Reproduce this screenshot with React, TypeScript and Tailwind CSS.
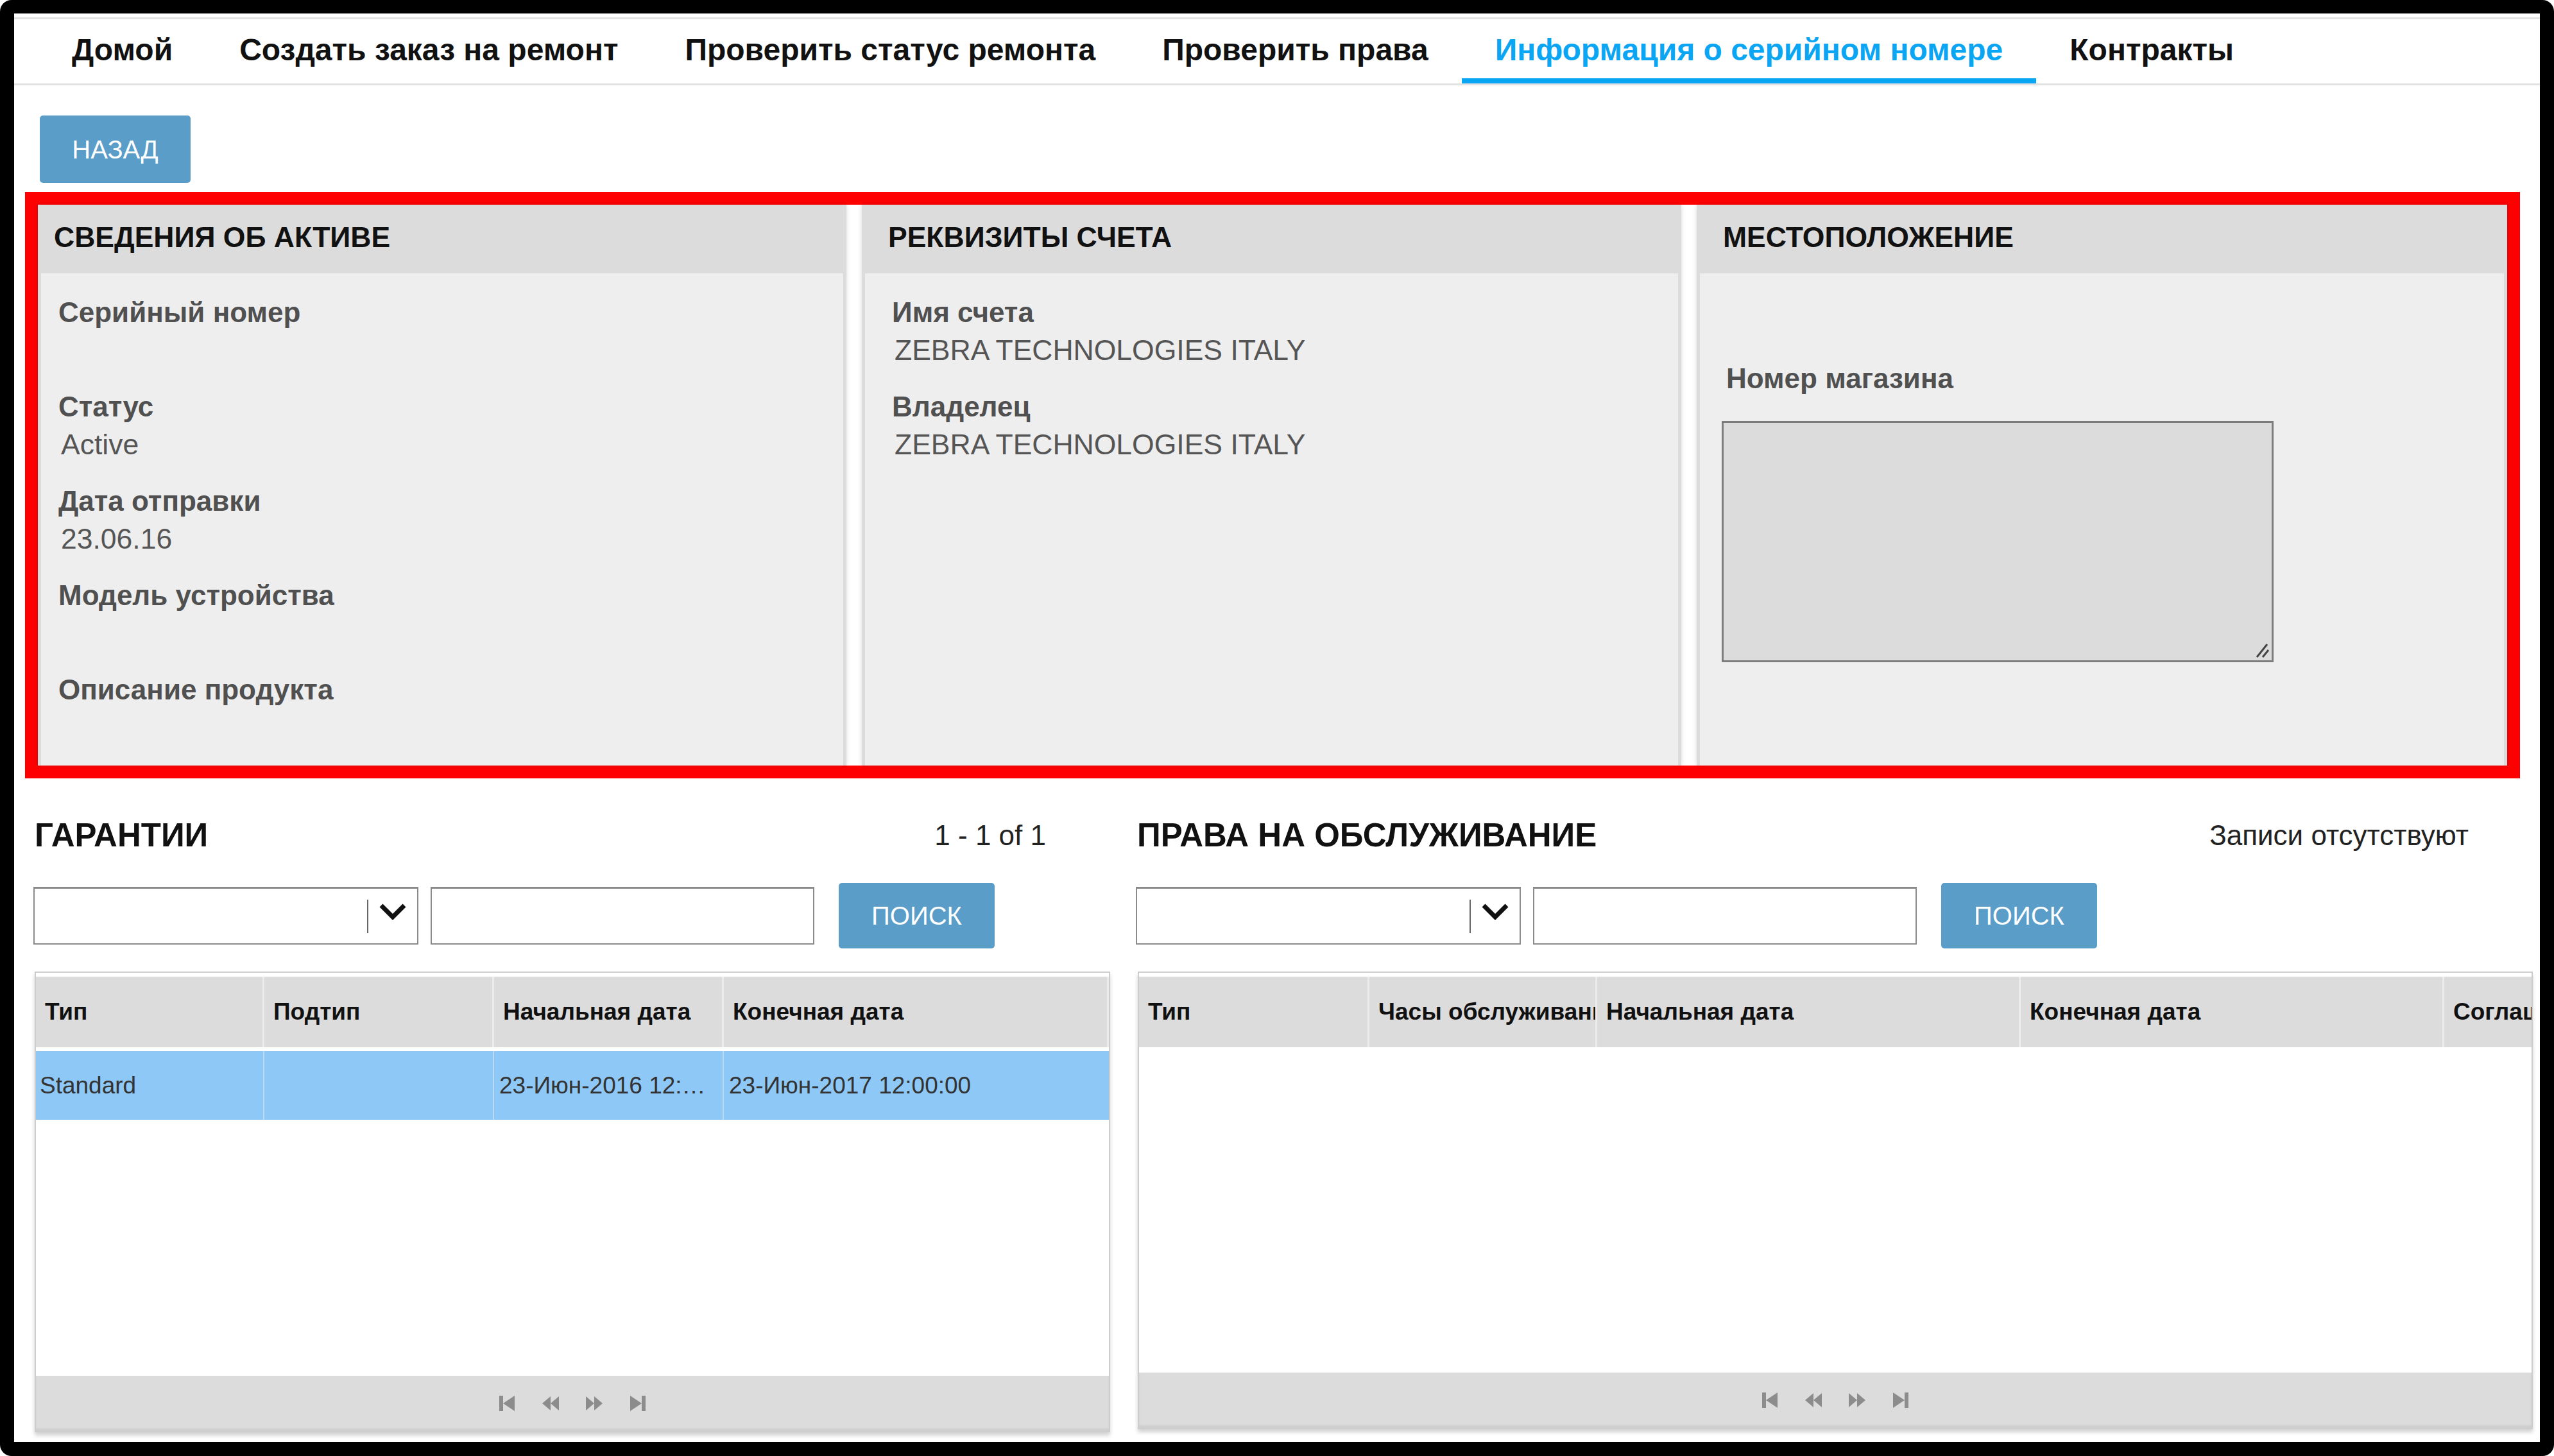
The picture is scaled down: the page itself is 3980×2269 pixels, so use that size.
import clsx from 'clsx';
import type { ReactNode } from 'react';

const NAV_ITEMS = [
    'Домой',
    'Создать заказ на ремонт',
    'Проверить статус ремонта',
    'Проверить права',
    'Информация о серийном номере',
    'Контракты',
];
const ACTIVE_TAB = 'Информация о серийном номере';

const WARRANTY_COLS = ['Тип', 'Подтип', 'Начальная дата', 'Конечная дата'];
const ENTITLEMENT_COLS = [
    { label: 'Тип', w: 'w-[359px]' },
    { label: 'Часы обслуживания', w: 'w-[355px]' },
    { label: 'Начальная дата', w: 'w-[660px]' },
    { label: 'Конечная дата', w: 'w-[660px]' },
    { label: 'Соглашение', w: 'w-[400px]' },
];

function Panel({ title, first, children }: { title: string; first?: boolean; children?: ReactNode }) {
    return (
        <div className="flex flex-col bg-[#dcdcdc] shadow-[0_0_7px_rgba(0,0,0,0.14)]">
            <div
                className={clsx(
                    'flex h-[107px] shrink-0 items-center pb-[4px] text-[44.5px] font-bold text-[#111]',
                    first ? 'pl-[25px]' : 'pl-[41px]',
                )}
            >
                {title}
            </div>
            <div className={clsx('mx-[5px] flex-1 bg-[#eeeeee] pt-[31px]', first ? 'pl-[27px]' : 'pl-[42px]')}>
                {children}
            </div>
        </div>
    );
}

function Field({ label, value }: { label: string; value?: string }) {
    return (
        <div className="mb-[29px]">
            <div className="h-[60px] text-[44px] leading-[60px] font-bold text-[#505050]">{label}</div>
            <div className="h-[58px] pl-[4px] text-[44.5px] leading-[58px] text-[#555]">{value}</div>
        </div>
    );
}

function PagerIcon({ kind }: { kind: 'first' | 'prev' | 'next' | 'last' }) {
    return (
        <svg width="28" height="26" viewBox="0 0 28 26" className="text-[#8c8c8c]" fill="currentColor">
            {kind === 'first' && (
                <>
                    <rect x="2" y="1" width="6" height="24" />
                    <polygon points="26,1 26,25 8,13" />
                </>
            )}
            {kind === 'prev' && (
                <>
                    <polygon points="14,2 14,24 1,13" />
                    <polygon points="27,2 27,24 14,13" />
                </>
            )}
            {kind === 'next' && (
                <>
                    <polygon points="1,2 1,24 14,13" />
                    <polygon points="14,2 14,24 27,13" />
                </>
            )}
            {kind === 'last' && (
                <>
                    <polygon points="2,1 2,25 20,13" />
                    <rect x="20" y="1" width="6" height="24" />
                </>
            )}
        </svg>
    );
}

function Pager() {
    return (
        <div className="flex h-[86px] shrink-0 items-center justify-center gap-[40px] bg-[#dcdcdc] shadow-[inset_0_-4px_3px_rgba(0,0,0,0.06)]">
            <PagerIcon kind="first" />
            <PagerIcon kind="prev" />
            <PagerIcon kind="next" />
            <PagerIcon kind="last" />
        </div>
    );
}

function Filters() {
    return (
        <div className="mt-[44px] flex h-[102px] items-center">
            <div className="flex h-[90px] w-[600px] items-center justify-end border-2 border-t-[3px] border-[#8a8a8a] bg-white">
                <div className="flex h-[52px] w-[78px] items-start border-l-2 border-[#666] pt-[4px] pl-[16px]">
                    <svg width="44" height="28" viewBox="0 0 44 28">
                        <polyline points="4,5 22,23 40,5" fill="none" stroke="#111" strokeWidth="7" />
                    </svg>
                </div>
            </div>
            <input className="ml-[19px] h-[90px] w-[598px] border-2 border-t-[3px] border-[#8a8a8a] bg-white outline-none" />
            <button className="ml-[38px] h-[102px] w-[243px] rounded-[5px] bg-[#5a9dc8] text-[40px] text-white">ПОИСК</button>
        </div>
    );
}

function SectionTitle({ title, info }: { title: string; info: string }) {
    return (
        <div className="flex h-[60px] items-center justify-between pr-[100px] pl-[2px]">
            <span className="text-[51px] font-bold text-[#111]">{title}</span>
            <span className="text-[44px] text-[#222]">{info}</span>
        </div>
    );
}

export default function App() {
    return (
        <div className="h-[2269px] w-[3980px] bg-white font-['Liberation_Sans',Arial,sans-serif]">
            <div className="h-full rounded-[18px] bg-black px-[22px] pt-[21px] pb-[22px]">
                <div className="h-full overflow-hidden bg-white pt-[6px]">
                    {/* навигация */}
                    <nav className="flex h-[106px] border-y-[3px] border-[#e2e2e2] pl-[38px]">
                        {NAV_ITEMS.map((item) => {
                            const active = item === ACTIVE_TAB;
                            return (
                                <div
                                    key={item}
                                    className={clsx(
                                        'flex items-center border-b-[8px] px-[52px] pt-[4px] text-[48px] font-bold',
                                        active ? 'border-[#0aa6f4] text-[#0aa6f4]' : 'border-transparent text-[#111]',
                                    )}
                                >
                                    {item}
                                </div>
                            );
                        })}
                    </nav>

                    <button className="mt-[47px] ml-[40px] h-[105px] w-[235px] rounded-[5px] bg-[#5a9dc8] text-[40px] text-white">
                        НАЗАД
                    </button>

                    {/* выделенный блок */}
                    <div className="mt-[14px] ml-[17px] grid h-[914px] w-[3888px] grid-cols-[1260px_1277px_1263px] gap-[24px] border-[20px] border-[#ff0000] bg-white">
                        <Panel title="СВЕДЕНИЯ ОБ АКТИВЕ" first>
                            <Field label="Серийный номер" />
                            <Field label="Статус" value="Active" />
                            <Field label="Дата отправки" value="23.06.16" />
                            <Field label="Модель устройства" />
                            <Field label="Описание продукта" />
                        </Panel>
                        <Panel title="РЕКВИЗИТЫ СЧЕТА">
                            <Field label="Имя счета" value="ZEBRA TECHNOLOGIES ITALY" />
                            <Field label="Владелец" value="ZEBRA TECHNOLOGIES ITALY" />
                        </Panel>
                        <Panel title="МЕСТОПОЛОЖЕНИЕ">
                            <div className="ml-[-4px] pt-[103px]">
                                <div className="h-[60px] pl-[3px] text-[44px] leading-[60px] font-bold text-[#505050]">
                                    Номер магазина
                                </div>
                                <div className="relative mt-[36px] ml-[-4px] h-[376px] w-[860px]">
                                    <textarea className="h-full w-full resize-none border-[3px] border-[#7d7d7d] bg-[#dcdcdc] outline-none" />
                                    <svg
                                        width="24"
                                        height="24"
                                        viewBox="0 0 24 24"
                                        className="absolute right-[6px] bottom-[6px]"
                                    >
                                        <line x1="4" y1="22" x2="20" y2="2" stroke="#444" strokeWidth="3" />
                                        <line x1="13" y1="22" x2="22" y2="11" stroke="#444" strokeWidth="3" />
                                    </svg>
                                </div>
                            </div>
                        </Panel>
                    </div>

                    {/* таблицы */}
                    <div className="mt-[59px] flex pl-[30px]">
                        <div className="w-[1678px]">
                            <SectionTitle title="ГАРАНТИИ" info="1 - 1 of 1" />
                            <Filters />
                            <div className="mt-[36px] ml-[2px] flex h-[718px] flex-col overflow-hidden border-2 border-[#cdcdcd] bg-white shadow-[0_5px_6px_rgba(0,0,0,0.18)]">
                                <div className="mt-[6px] grid h-[110px] shrink-0 grid-cols-[356px_358px_358px_1fr]">
                                    {WARRANTY_COLS.map((c) => (
                                        <div
                                            key={c}
                                            className="flex items-center border-r-[3px] border-[#ececec] bg-[#dcdcdc] pl-[14px] text-[37px] font-bold text-[#111]"
                                        >
                                            {c}
                                        </div>
                                    ))}
                                </div>
                                <div className="mt-[6px] grid h-[107px] shrink-0 grid-cols-[356px_358px_358px_1fr] bg-[#8ec8f6] text-[37px] text-[#333]">
                                    <div className="flex items-center border-r-2 border-[#b9dbf6] pl-[6px]">Standard</div>
                                    <div className="border-r-2 border-[#b9dbf6]" />
                                    <div className="flex items-center overflow-hidden border-r-2 border-[#b9dbf6] px-[8px]">
                                        <span className="truncate">23-Июн-2016 12:00:00</span>
                                    </div>
                                    <div className="flex items-center pl-[8px]">23-Июн-2017 12:00:00</div>
                                </div>
                                <div className="flex-1" />
                                <Pager />
                            </div>
                        </div>

                        <div className="ml-[40px] w-[2177px]">
                            <SectionTitle title="ПРАВА НА ОБСЛУЖИВАНИЕ" info="Записи отсутствуют" />
                            <Filters />
                            <div className="mt-[36px] ml-[3px] flex h-[713px] flex-col overflow-hidden border-2 border-[#cdcdcd] bg-white shadow-[0_5px_6px_rgba(0,0,0,0.18)]">
                                <div className="mt-[6px] flex h-[110px] shrink-0">
                                    {ENTITLEMENT_COLS.map((c) => (
                                        <div
                                            key={c.label}
                                            className={clsx(
                                                'flex shrink-0 items-center overflow-hidden border-r-[3px] border-[#ececec] bg-[#dcdcdc] pl-[14px] text-[37px] whitespace-nowrap font-bold text-[#111]',
                                                c.w,
                                            )}
                                        >
                                            {c.label}
                                        </div>
                                    ))}
                                </div>
                                <div className="flex-1" />
                                <Pager />
                            </div>
                        </div>
                    </div>
                </div>
            </div>
        </div>
    );
}
